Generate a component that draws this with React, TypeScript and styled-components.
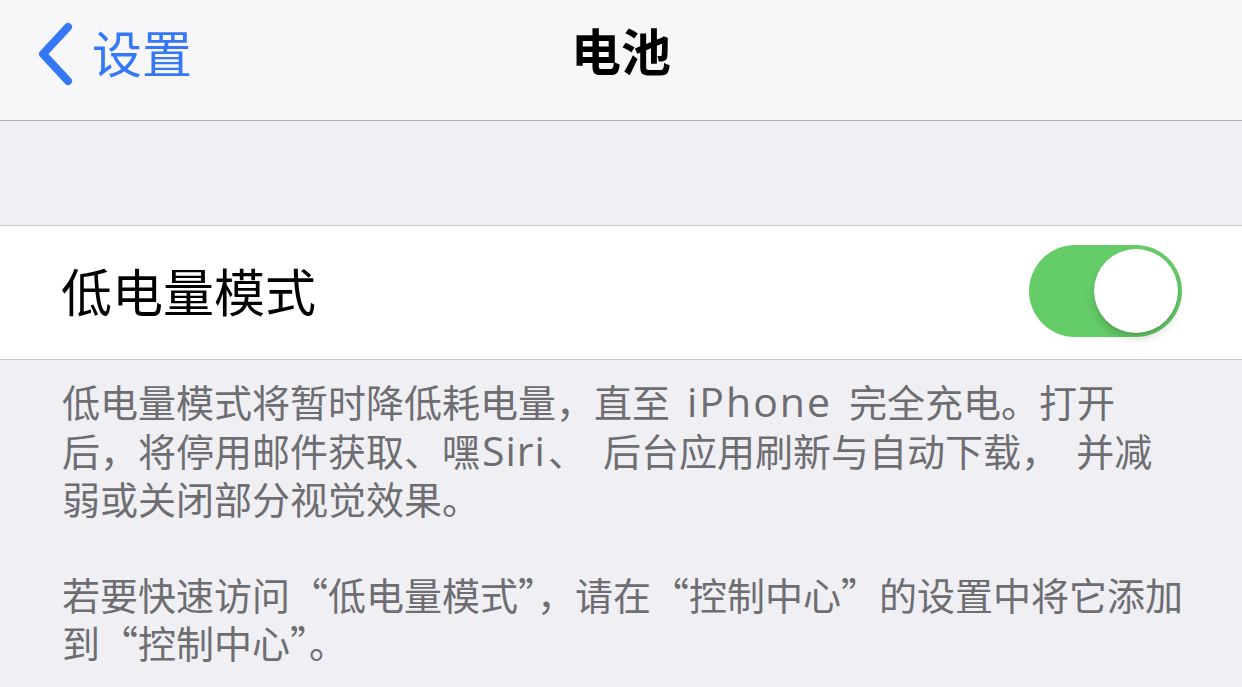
import styled, { createGlobalStyle } from "styled-components";

const GlobalStyle = createGlobalStyle`
    html, body {
        margin: 0;
        padding: 0;
        background: #efeff4;
    }

    body {
        font-family: "Noto Sans CJK SC", "Noto Sans", sans-serif;
        -webkit-font-smoothing: antialiased;
    }
`

export default function App() {
    return (
        <>
            <GlobalStyle/>
            <Page>
                <NavBar>
                    <BackButton>
                        <svg width="42" height="66" viewBox="0 0 42 66" fill="none">
                            <path d="M34 6 L9 33 L34 60" stroke="#3478f6" strokeWidth="8"
                                  strokeLinecap="round" strokeLinejoin="round"/>
                        </svg>
                        <BackLabel>设置</BackLabel>
                    </BackButton>
                    <NavTitle>电池</NavTitle>
                </NavBar>

                <Spacer/>

                <Group>
                    <Row>
                        <RowLabel>低电量模式</RowLabel>
                        <Toggle on={true}>
                            <Knob/>
                        </Toggle>
                    </Row>
                </Group>

                <Footer>
                    <FooterParagraph>
                        低电量模式将暂时降低耗电量，直至<Latin>iPhone</Latin>完全充电。打开<br/>
                        后，将停用邮件获取、嘿<Latin tight>Siri</Latin><Punct>、</Punct>后台应用刷新与自动下载<Punct>，</Punct>并减<br/>
                        弱或关闭部分视觉效果。
                    </FooterParagraph>
                    <FooterParagraph>
                        若要快速访问“低电量模式”，请在“控制中心”的设置中将它添加<br/>
                        到“控制中心”。
                    </FooterParagraph>
                </Footer>
            </Page>
        </>
    );
}

const Page = styled.div`
    width: 1242px;
    min-height: 687px;
    background: #efeff4;
    overflow: hidden;
`

const NavBar = styled.header`
    position: relative;
    height: 120px;
    background: #f7f7f9;
    border-bottom: 1px solid #b4b4b8;
    display: flex;
    align-items: center;
    justify-content: center;
`

const BackButton = styled.div`
    position: absolute;
    left: 34px;
    top: 0;
    height: 108px;
    display: flex;
    align-items: center;
    gap: 16px;
    color: #3478f6;
`

const BackLabel = styled.span`
    font-size: 50px;
    line-height: 1;
    color: #3478f6;
    margin-bottom: 6px;
`

const NavTitle = styled.h1`
    margin: 0 0 22px;
    font-size: 50px;
    font-weight: 700;
    line-height: 1;
    color: #000;
`

const Spacer = styled.div`
    height: 104px;
    background: #f0eff6;
`

const Group = styled.section`
    background: #fff;
    border-top: 1px solid #c8c7cc;
    border-bottom: 1px solid #c8c7cc;
`

const Row = styled.div`
    height: 133px;
    padding: 0 60px 0 61px;
    display: flex;
    align-items: center;
    justify-content: space-between;
`

const RowLabel = styled.span`
    font-size: 51px;
    line-height: 1;
    color: #000;
    margin-bottom: 4px;
`

const Toggle = styled.div<{ on: boolean }>`
    position: relative;
    width: 153px;
    height: 92px;
    border-radius: 46px;
    background: ${p => (p.on ? "#65cd68" : "#e5e5ea")};
    margin-top: -4px;
`

const Knob = styled.div`
    position: absolute;
    top: 4px;
    right: 4px;
    width: 84px;
    height: 84px;
    border-radius: 50%;
    background: #fff;
    box-shadow: 0 6px 10px rgba(0, 0, 0, 0.15), 0 2px 2px rgba(0, 0, 0, 0.08);
`

const Footer = styled.div`
    padding: 17px 30px 0 62px;
    display: flex;
    flex-direction: column;
    gap: 47px;
`

const FooterParagraph = styled.p`
    margin: 0;
    font-size: 38px;
    line-height: 48.5px;
    color: #6d6d72;
    white-space: nowrap;
`

const Latin = styled.span<{ tight?: boolean }>`
    font-family: "Open Sans", "Noto Sans", sans-serif;
    font-size: 41px;
    line-height: 1;
    letter-spacing: ${p => (p.tight ? "1px" : "2px")};
    margin: ${p => (p.tight ? "0 2px" : "0 17px")};
`

const Punct = styled.span`
    margin-right: 0.45em;
`
